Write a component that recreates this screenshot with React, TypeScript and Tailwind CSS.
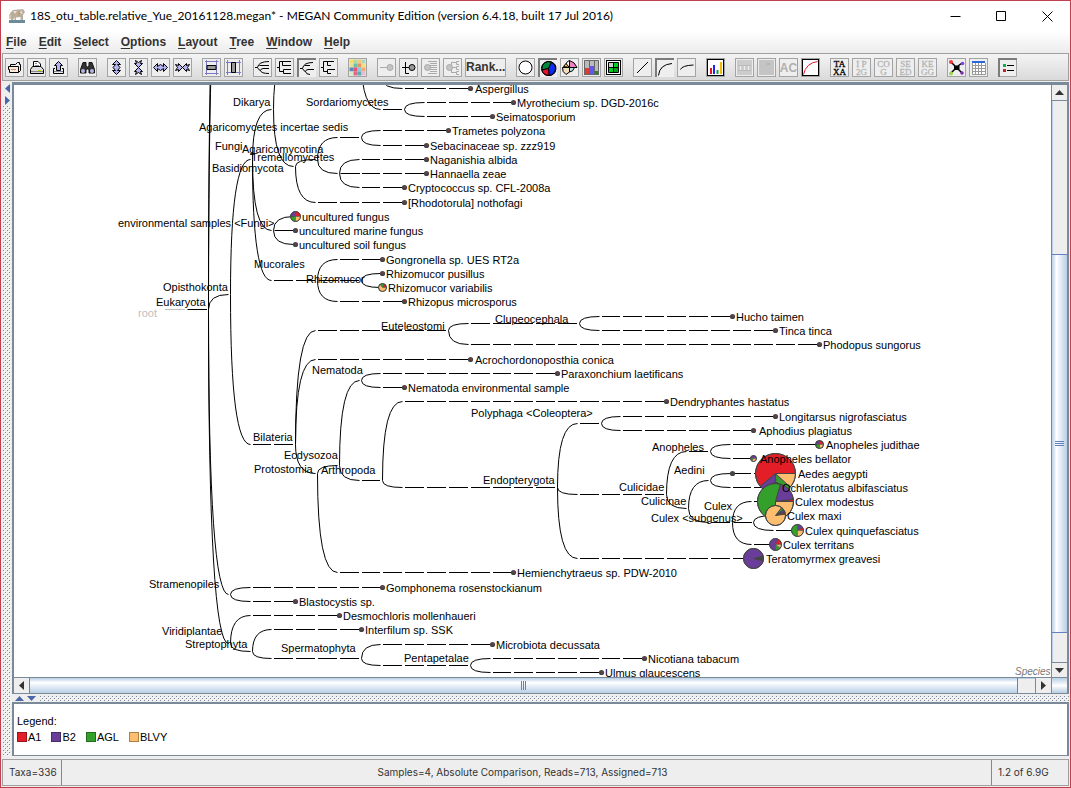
import React from "react";

/* ---------- taxonomy tree data ---------- */

const X0 = 208.5;
const STEP = 21.82;
const col = (k: number) => Math.floor(X0 + k * STEP - 0.1) + 0.5;

// [parent column, parent y, child column, child y]
const EDGES: [number, number, number, number][] = [
  [-1, 309.5, 0, 309.5],
  [0, 309.5, 1, -100],
  [0, 309.5, 1, -160],
  [0, 309.5, 1, 294.5],
  [0, 309.5, 1, 594.5],
  [0, 309.5, 1, 643.5],
  [1, 294.5, 2, 159.5],
  [1, 294.5, 4, 444.5],
  [2, 159.5, 3, 109.5],
  [2, 159.5, 3, 230.5],
  [2, 159.5, 5, 280.5],
  [3, 109.5, 4, 50.5],
  [3, 109.5, 4, 166.5],
  [3, 230.5, 4, 216.5],
  [3, 230.5, 4, 230.5],
  [3, 230.5, 4, 244.5],
  [4, 166.5, 5, 159.5],
  [4, 166.5, 9, 202.5],
  [5, 159.5, 7, 137.5],
  [5, 159.5, 6, 173.5],
  [7, 137.5, 11, 130.5],
  [7, 137.5, 10, 145.5],
  [6, 173.5, 10, 159.5],
  [6, 173.5, 10, 173.5],
  [6, 173.5, 9, 187.5],
  [5, 280.5, 8, 259.5],
  [5, 280.5, 7, 280.5],
  [5, 280.5, 9, 301.5],
  [7, 280.5, 8, 273.5],
  [7, 280.5, 8, 287.5],
  [7, 60.5, 9, 109.5],
  [8, 78.5, 12, 88.5],
  [9, 109.5, 14, 102.5],
  [9, 109.5, 13, 116.5],
  [4, 444.5, 11, 330.5],
  [4, 444.5, 12, 359.5],
  [4, 444.5, 5, 473.5],
  [11, 330.5, 17, 323.5],
  [11, 330.5, 28, 344.5],
  [17, 323.5, 24, 316.5],
  [17, 323.5, 26, 330.5],
  [5, 473.5, 6, 465.5],
  [5, 473.5, 14, 572.5],
  [6, 465.5, 7, 380.5],
  [6, 465.5, 8, 480.5],
  [7, 380.5, 16, 373.5],
  [7, 380.5, 9, 387.5],
  [8, 480.5, 21, 401.5],
  [8, 480.5, 16, 487.5],
  [16, 487.5, 18, 423.5],
  [16, 487.5, 21, 494.5],
  [16, 487.5, 25, 558.5],
  [18, 423.5, 26, 416.5],
  [18, 423.5, 25, 430.5],
  [21, 494.5, 23, 451.5],
  [21, 494.5, 22, 508.5],
  [23, 451.5, 28, 444.5],
  [23, 451.5, 25, 458.5],
  [22, 508.5, 23, 480.5],
  [22, 508.5, 24, 522.5],
  [23, 480.5, 26, 473.5],
  [23, 480.5, 26, 487.5],
  [24, 522.5, 26, 501.5],
  [24, 522.5, 25, 522.5],
  [24, 522.5, 26, 544.5],
  [25, 522.5, 26, 515.5],
  [25, 522.5, 27, 530.5],
  [1, 594.5, 8, 587.5],
  [1, 594.5, 4, 601.5],
  [1, 643.5, 6, 615.5],
  [1, 643.5, 2, 651.5],
  [2, 651.5, 7, 629.5],
  [2, 651.5, 7, 658.5],
  [7, 658.5, 13, 644.5],
  [7, 658.5, 12, 665.5],
  [12, 665.5, 20, 658.5],
  [12, 665.5, 18, 672.5],
];

// [label, x, centre y]
const INNER: [string, number, number][] = [
  ["Dikarya", 233, 102],
  ["Sordariomycetes", 306, 102],
  ["Agaricomycetes incertae sedis", 199, 127],
  ["Fungi", 215, 146],
  ["Agaricomycotina", 242, 149],
  ["Tremellomycetes", 251, 157],
  ["Basidiomycota", 212, 168],
  ["environmental samples <Fungi>", 118, 223],
  ["Mucorales", 254, 264],
  ["Rhizomucor", 306, 279],
  ["Opisthokonta", 163, 287],
  ["Eukaryota", 156, 302],
  ["Euteleostomi", 381, 326],
  ["Clupeocephala", 495, 319],
  ["Nematoda", 312, 370],
  ["Bilateria", 253, 437],
  ["Ecdysozoa", 284, 455],
  ["Protostomia", 254, 469],
  ["Arthropoda", 321, 470],
  ["Polyphaga <Coleoptera>", 471, 413],
  ["Endopterygota", 483, 480],
  ["Anopheles", 652, 447],
  ["Culicidae", 619, 487],
  ["Aedini", 674, 470],
  ["Culicinae", 641, 501],
  ["Culex", 704, 506],
  ["Culex <subgenus>", 651, 518],
  ["Stramenopiles", 149, 584],
  ["Viridiplantae", 162, 631],
  ["Streptophyta", 185, 644],
  ["Spermatophyta", 281, 648],
  ["Pentapetalae", 404, 658],
];

// [label, column of its dot, y, x of the text]
const LEAVES: [string, number, number, number][] = [
  ["Aspergillus", 12, 88.5, 475],
  ["Myrothecium sp. DGD-2016c", 14, 102.5, 517],
  ["Seimatosporium", 13, 116.5, 496],
  ["Trametes polyzona", 11, 130.5, 452],
  ["Sebacinaceae sp. zzz919", 10, 145.5, 430],
  ["Naganishia albida", 10, 159.5, 430],
  ["Hannaella zeae", 10, 173.5, 430],
  ["Cryptococcus sp. CFL-2008a", 9, 187.5, 408],
  ["[Rhodotorula] nothofagi", 9, 202.5, 408],
  ["uncultured marine fungus", 4, 230.5, 299],
  ["uncultured soil fungus", 4, 244.5, 299],
  ["Gongronella sp. UES RT2a", 8, 259.5, 386],
  ["Rhizomucor pusillus", 8, 273.5, 386],
  ["Rhizopus microsporus", 9, 301.5, 408],
  ["Hucho taimen", 24, 316.5, 736],
  ["Tinca tinca", 26, 330.5, 779],
  ["Phodopus sungorus", 28, 344.5, 823],
  ["Acrochordonoposthia conica", 12, 359.5, 475],
  ["Paraxonchium laetificans", 16, 373.5, 561],
  ["Nematoda environmental sample", 9, 387.5, 408],
  ["Dendryphantes hastatus", 21, 401.5, 670],
  ["Longitarsus nigrofasciatus", 26, 416.5, 779],
  ["Aphodius plagiatus", 25, 430.5, 759],
  ["Hemienchytraeus sp. PDW-2010", 14, 572.5, 517],
  ["Gomphonema rosenstockianum", 8, 587.5, 386],
  ["Blastocystis sp.", 4, 601.5, 299],
  ["Desmochloris mollenhaueri", 6, 615.5, 343],
  ["Interfilum sp. SSK", 7, 629.5, 365],
  ["Microbiota decussata", 13, 644.5, 496],
  ["Nicotiana tabacum", 20, 658.5, 648],
  ["Ulmus glaucescens", 18, 672.5, 605],
];

const RED = "#e31e26";
const PURPLE = "#6a3d9a";
const GREEN = "#33a02c";
const ORANGE = "#fdbf6f";
const DARK = "#454545";

type Slice = [number, number, string];
type Pie = { label: string; k: number; y: number; r: number; tx: number; slices: Slice[] };

const QUARTERS: Slice[] = [
  [0, 90, RED],
  [90, 180, PURPLE],
  [180, 270, GREEN],
  [270, 360, ORANGE],
];

const PIES: Pie[] = [
  { label: "uncultured fungus", k: 4, y: 216.5, r: 5, tx: 302, slices: QUARTERS },
  { label: "Rhizomucor variabilis", k: 8, y: 287.5, r: 4, tx: 388, slices: [[0, 60, RED], [60, 130, GREEN], [130, 360, ORANGE]] },
  { label: "Anopheles judithae", k: 28, y: 444.5, r: 4, tx: 826, slices: QUARTERS },
  { label: "Anopheles bellator", k: 25, y: 458.5, r: 3, tx: 760, slices: [[0, 170, PURPLE], [170, 240, GREEN], [240, 360, ORANGE]] },
  { label: "Aedes aegypti", k: 26, y: 473.5, r: 20, tx: 798, slices: [[0, 220, RED], [220, 272, PURPLE], [272, 317, GREEN], [317, 360, ORANGE]] },
  { label: "Ochlerotatus albifasciatus", k: 26, y: 487.5, r: 5, tx: 782, slices: QUARTERS },
  { label: "Culex modestus", k: 26, y: 501.5, r: 18, tx: 795, slices: [[0, 7, RED], [7, 74, PURPLE], [74, 270, GREEN], [270, 360, ORANGE]] },
  { label: "Culex maxi", k: 26, y: 515.5, r: 10, tx: 787, slices: [[8, 20, RED], [20, 36, PURPLE], [36, 52, GREEN], [52, 368, ORANGE]] },
  { label: "Culex quinquefasciatus", k: 27, y: 530.5, r: 6, tx: 805, slices: [[0, 32, RED], [32, 90, PURPLE], [90, 270, GREEN], [270, 360, ORANGE]] },
  { label: "Culex territans", k: 26, y: 544.5, r: 6, tx: 783, slices: [[0, 70, RED], [70, 270, PURPLE], [270, 325, GREEN], [325, 360, ORANGE]] },
  { label: "Teratomyrmex greavesi", k: 25, y: 558.5, r: 10, tx: 766, slices: [[-14, 14, DARK], [14, 346, PURPLE]] },
];

function edgePath([pk, py, ck, cy]: [number, number, number, number]) {
  const px = col(pk);
  let d = "";
  if (py === cy) d = `M${px + 1} ${cy}H${col(pk + 1) - 1.5}`;
  else d = `M${px} ${py}Q${px} ${cy} ${col(pk + 1) - 2} ${cy}`;
  for (let k = pk + 1; k < ck; k++) d += `M${col(k) + 0.5} ${cy}H${col(k + 1) - 2.5}`;
  return d;
}

function slicePath(cx: number, cy: number, r: number, a: number, b: number) {
  const p = (t: number) => {
    const rad = (t * Math.PI) / 180;
    return `${(cx + r * Math.cos(rad)).toFixed(2)} ${(cy - r * Math.sin(rad)).toFixed(2)}`;
  };
  return `M${cx} ${cy}L${p(a)}A${r} ${r} 0 ${b - a > 180 ? 1 : 0} 0 ${p(b)}Z`;
}

function Tree() {
  return (
    <svg width="1037" height="592" viewBox="14 85 1037 592" className="block shrink-0 text-[11px]" role="img" aria-label="Taxonomy tree">
      <g fill="none" strokeWidth="1">
        <path d="M165 309.5H185" stroke="#c0c0c0" />
        <g stroke="#000">
          {EDGES.map((e, i) => (
            <path key={i} d={edgePath(e)} />
          ))}
          <path d="M250 154H255" />
        </g>
      </g>
      <text x="138" y="317" fill="#c0c0c0">root</text>
      {LEAVES.map(([name, k, y]) => (
        <g key={name}>
          <circle cx={col(k)} cy={y} r="2.6" fill={DARK} />
          <circle cx={col(k) + 0.5} cy={y - 0.5} r="0.9" fill="#8a3a4a" />
        </g>
      ))}
      <circle cx={col(24)} cy={473.5} r="2.6" fill={DARK} />
      {PIES.map((p) => (
        <g key={p.label} stroke={DARK}>
          {p.slices.map(([a, b, c]) => (
            <path key={c} d={slicePath(col(p.k), p.y, p.r, a, b)} fill={c} strokeWidth={p.r < 8 ? 0.5 : 1} />
          ))}
          <circle cx={col(p.k)} cy={p.y} r={p.r} fill="none" strokeWidth="1" />
        </g>
      ))}
      <g fill="#000">
        {LEAVES.map(([name, , y, x]) => (
          <text key={name} x={x} y={Math.round(y + 4.5)}>{name}</text>
        ))}
        {PIES.map((p) => (
          <text key={p.label} x={p.tx} y={p.y + 4.5}>{p.label}</text>
        ))}
        {INNER.map(([name, x, y]) => (
          <text key={name} x={x} y={y + 4}>{name}</text>
        ))}
      </g>
      <text x="1015" y="675" className="text-[10px] italic" fill="#777">Species</text>
    </svg>
  );
}

/* ---------- toolbar ---------- */

type Tool = { name: string; icon: React.ReactNode; pressed?: boolean; off?: boolean };

const L = (d: string, stroke = "#000", fill = "none") => <path d={d} stroke={stroke} fill={fill} />;

function letters(a: string, b: string, color: string) {
  return (
    <g fill={color} stroke={color} strokeWidth="0.3" className="text-[9px]" fontFamily="Liberation Serif, serif" textAnchor="middle">
      <text x="8.5" y="8">{a}</text>
      <text x="8.5" y="16">{b}</text>
    </g>
  );
}

const arrow = "#b4b4f0";
const GROUPS: Tool[][] = [
  [
    { name: "Open", icon: <>{L("M4.5 7V5.5H9.5L11.5 3.5H13.5V5.5H14.5V11.5L12.5 13.5")}{L("M2.5 7.5H12.5V13.5H3.5V10.5H2.5Z", "#000", "#fbe9dd")}{L("M5 10.5H10", "#c08868")}</> },
    { name: "Print", icon: <>{L("M5.5 8V2.5H10L12.5 5V8", "#000", "#fff")}{L("M4.5 7.5H13L15.5 10.5V14.5H2.5V10.5Z", "#000", "#ddd")}{L("M3 12.5H15", "#888")}{L("M10 11.5H13", "#c0d000")}{L("M7 4.5H9M7 6.5H11", "#88a")}</> },
    { name: "Export", icon: <>{L("M8.5 2.5L12.5 6.5H10.5V11.5H6.5V6.5H4.5Z", "#000", arrow)}{L("M5 9.5H3.5V14.5H13.5V9.5H12", "#000")}{L("M4 12.5H13", "#889")}</> },
  ],
  [{ name: "Find", icon: <>{L("M4 3.5H7V7L8.5 8L10 7V3.5H13L15.5 10.5V14H10V10H7V14H1.5V10.5Z", "#111", "#333")}<circle cx="4" cy="12" r="2" fill="#b4b4e8" /><circle cx="13" cy="12" r="2" fill="#b4b4e8" /></> }],
  [
    { name: "Expand vertical", icon: L("M8.5 1.5L12.5 5.5H9.5L12 8.500L9.500 11.500H12.5L8.5 15.5L4.5 11.500H7.500L5 8.500L7.500 5.500H4.5Z", "#000", arrow) },
    { name: "Contract vertical", icon: <>{L("M5.5 1.500L8.5 3.500L11.5 1.500L10.500 4.500H12.500L8.5 8.500L4.500 4.500H6.500Z", "#000", arrow)}{L("M5.5 15.500L8.5 13.500L11.5 15.500L10.500 12.500H12.500L8.5 8.500L4.500 12.500H6.500Z", "#000", arrow)}</> },
    { name: "Expand horizontal", icon: L("M1.5 8.5L5.5 4.500V7.500L8.500 5.500L11.500 7.500V4.500L15.500 8.5L11.500 12.500V9.500L8.500 11.500L5.500 9.500V12.500Z", "#000", arrow) },
    { name: "Contract horizontal", icon: <>{L("M1.500 5.500L4.500 6.500V4.500L8.500 8.5L4.500 12.500V10.500L1.500 11.500L3.500 8.5Z", "#000", arrow)}{L("M15.500 5.500L12.500 6.500V4.500L8.500 8.5L12.500 12.500V10.500L15.500 11.500L13.500 8.5Z", "#000", arrow)}</> },
  ],
  [
    { name: "Fit vertical", icon: <>{L("M3.5 1V16M13.5 1V16", "#7a7ac0")}{L("M2 2.5H15.5M2 14.5H15.5", "#7a7ac0")}{L("M4 6.5H13V10.5H4Z", "#000", "#999")}</> },
    { name: "Fit horizontal", icon: <>{L("M1 3.5H16M1 13.5H16", "#7a7ac0")}{L("M2.5 1V16M14.5 1V16", "#7a7ac0")}{L("M6.5 3.5H10.5V13.5H6.5Z", "#000", "#999")}</> },
  ],
  [
    { name: "Rounded cladogram", icon: L("M1 8.5H3.5Q4.5 2.5 15 2.5M5.500 6.500H15M3.500 8.500Q5 11.500 6.500 11.500M15 9.500H9Q6.500 10 6.500 11.500Q7 14.500 15 14.500") },
    { name: "Rectangular cladogram", icon: L("M1 8.500H3.500V2.500H15M6.500 2.500V6.500H15M3.500 8.500V12.500H7.500M7.500 10.500V14.500H15M7.500 10.500H15") },
    { name: "Rounded phylogram", pressed: true, icon: L("M1 8.500H3.500Q4.500 2.500 14 2.500M5.500 5.500H11M3.500 8.500Q5 11.500 6.500 11.500M15 9.500H9Q6.500 10 6.500 11.500Q7 14.500 11 14.500") },
    { name: "Rectangular phylogram", icon: L("M1 8.500H3.500V2.500H14M7.500 2.500V6.500H11M3.500 8.500V12.500H7.500M7.500 10.500V14.500H11M7.500 10.500H15") },
  ],
  [{
    name: "Colors",
    icon: <g>{["#f5dc64", "#b4d6a0", "#f2c878", "#a8d8c8", "#e8e09a", "#62c4a8", "#e8906c", "#f4e078", "#5b86c0", "#e8506c", "#8fc4e0", "#f3a878", "#d8e8d0", "#d86c80", "#5ca8b8", "#e0c0d0"].map((c, i) => (
      <rect key={i} x={(i % 4) * 4 + 0.5} y={Math.floor(i / 4) * 4 + 0.5} width="4" height="4" fill={c} />
    ))}</g>,
  }],
  [
    { name: "Collapse", off: true, icon: <>{L("M2 8.500H9", "#aaa")}<circle cx="12" cy="8.500" r="3" fill="#c4c4c4" stroke="#aaa" /></> },
    { name: "Uncollapse", icon: <>{L("M2 8.500H9M5.500 3V14.500H9")}<circle cx="12" cy="8.500" r="3" fill="#999" stroke="#000" /></> },
    { name: "Uncollapse subtree", off: true, icon: <>{L("M6 2.500H15M8 4.500H15M8 6.500H15M8 8.500H15M8 10.500H15M8 12.500H15M6 14.500H15", "#aaa")}<circle cx="5.500" cy="8.500" r="3" fill="#c4c4c4" stroke="#aaa" /></> },
    { name: "Collapse subtree", off: true, icon: <>{L("M7.500 3V14M8 3.500H12M8 8.500H12M8 13.500H12M15 2.500H12.500V5.500H15M15 7.500H12.500V10.500H15M15 12.500H12.500V15.500H15", "#aaa")}<circle cx="5.500" cy="8.500" r="3" fill="#c4c4c4" stroke="#aaa" /></> },
  ],
  [
    { name: "Draw circles", icon: <circle cx="8.500" cy="8.500" r="6.500" fill="#fff" stroke="#000" /> },
    { name: "Draw pies", pressed: true, icon: <>{L("M8.500 8.500L2 10A7 7 0 0 1 11.500 2Z", "#000", "#008a3c")}{L("M8.500 8.500L11.500 2A7 7 0 0 1 9 15.500Z", "#000", "#0a2cf0")}{L("M8.500 8.500L9 15.500A7 7 0 0 1 2 10Z", "#000", "#e8102a")}<circle cx="8.500" cy="8.500" r="7" fill="none" stroke="#000" /></> },
    { name: "Draw coxcombs", icon: <>{L("M8.500 8.500L5 5Q6 2 8.500 1.500Z", "#000", "#fff")}{L("M8.500 8.500L2.500 7.500L5 4.500Z", "#000", "#f0c840")}{L("M8.500 8.500V1.500Q14 3 16 8.500Z", "#000", "#f080c0")}{L("M8.500 8.500H13.500Q12 13 8.500 13Z", "#000", "#b0e8e0")}{L("M8.500 8.500V13L5 15.500Q1 13 1.500 8.500Z", "#000", "#f4dcb8")}</> },
    { name: "Draw bars", icon: <><rect x="1" y="1" width="15" height="15" fill="#bbb" /><rect x="1" y="9" width="5" height="7" fill="#e03c2c" /><rect x="6" y="7" width="5" height="9" fill="#5a5af0" /><rect x="11" y="12" width="5" height="4" fill="#208c20" />{L("M1.500 1.500H15.500V15.500H1.500ZM6.500 1V16M11.500 1V16", "#666")}</> },
    { name: "Draw heatmaps", icon: <><rect x="1.500" y="1.500" width="14" height="14" fill="#fff" stroke="#000" /><rect x="4" y="4" width="9" height="9" fill="#ccc" /><rect x="9" y="4" width="4" height="4" fill="#00d020" /><rect x="4" y="9" width="4" height="4" fill="#00d020" /><rect x="9" y="9" width="4" height="4" fill="#00a020" />{L("M3.500 3.500H13.500V13.500H3.500ZM8.500 3V14M3 8.500H14")}</> },
  ],
  [
    { name: "Linear scale", icon: L("M3 14L14 3") },
    { name: "Square-root scale", pressed: true, icon: L("M1.500 15.500Q2.500 4.500 15 3.500") },
    { name: "Log scale", icon: L("M2.500 10.500Q4 6.500 15.500 6") },
  ],
  [{ name: "Chart", icon: <><rect x="0.500" y="0.500" width="16" height="16" fill="#fff" stroke="#000" /><rect x="3" y="9" width="2" height="6" fill="#e8102a" /><rect x="6" y="6" width="2" height="9" fill="#2020f0" /><rect x="9.500" y="11" width="2" height="4" fill="#10a040" /><rect x="13" y="3" width="2" height="12" fill="#f8b800" /></> }],
  [
    { name: "Alignment", off: true, icon: <><rect x="1" y="1" width="15" height="15" fill="#ccc" />{L("M2 6.500H15M2 11.500H15", "#bbb")}{L("M4.500 7V11M8.500 7V11M12.500 7V11", "#eee")}</> },
    { name: "Inspector", off: true, icon: <><rect x="1" y="1" width="15" height="15" fill="#c4c4c4" /><rect x="9" y="4" width="3" height="2" fill="#b4b4b4" /></> },
    { name: "Attributes", off: true, icon: <text x="8.500" y="13" textAnchor="middle" className="text-[12px] font-bold" fill="#b0b0b0">AC</text> },
    { name: "Rarefaction", icon: <><rect x="0.500" y="0.500" width="16" height="16" fill="#fff" stroke="#000" />{L("M1.500 15.500Q4 4 15.500 2.500", "#e8102a")}</> },
  ],
  [
    { name: "Taxonomy", icon: letters("TA", "XA", "#000") },
    { name: "InterPro", off: true, icon: letters("I P", "2G", "#b4b4b4") },
    { name: "COG", off: true, icon: letters("CO", "G", "#b4b4b4") },
    { name: "SEED", off: true, icon: letters("SE", "ED", "#b4b4b4") },
    { name: "KEGG", off: true, icon: letters("KE", "GG", "#b4b4b4") },
  ],
  [
    { name: "Cluster", icon: <><path d="M3 3L7 7M14 4L10 7M3 14L7 10M14 14L10 10" stroke="#000" strokeWidth="1.500" />{L("M6.500 7H11V10.500H6.500Z", "#000", "#000")}<circle cx="3" cy="3" r="2" fill="#f03838" /><circle cx="14.500" cy="4.500" r="1.800" fill="#8040f0" /><circle cx="3" cy="14.500" r="2" fill="#9cd850" /><circle cx="14" cy="14" r="1.800" fill="#8030b0" /></> },
    { name: "Table", icon: <><rect x="2" y="3" width="13" height="12" fill="#fff" /><rect x="2" y="2" width="13" height="2" fill="#2868d8" />{L("M2.500 4V15.500H15.500V4M2 6.500H15M2 9.500H15M2 12.500H15M5.500 4V15M8.500 4V15M11.500 4V15", "#999")}</> },
  ],
  [{ name: "Show legend", pressed: true, icon: <><rect x="3" y="4" width="3" height="3" fill="#10b050" /><rect x="3" y="9" width="3" height="3" fill="#c02030" />{L("M7 5.500H14M7 10.500H14")}<path d="M16.500 0V16.500H0" stroke="#a3a3a3" /></> }],
];

function ToolButton({ tool }: { tool: Tool }) {
  return (
    <button
      type="button"
      aria-label={tool.name}
      disabled={tool.off}
      aria-pressed={tool.pressed}
      className={
        tool.pressed
          ? "flex size-[19px] items-center justify-center border-t-2 border-l-2 border-[#7c7c7c] bg-[#efefef]"
          : "flex size-[19px] items-center justify-center border border-[#a3a3a3] bg-[#eeeeee]"
      }
    >
      <svg width="17" height="17" viewBox="0 0 17 17" fill="none" aria-hidden="true">{tool.icon}</svg>
    </button>
  );
}

/* ---------- small parts ---------- */

function Dots({ id }: { id: string }) {
  return (
    <svg className="block h-full w-full" aria-hidden="true">
      <defs>
        <pattern id={id} width="4" height="4" patternUnits="userSpaceOnUse">
          <rect width="1" height="1" fill="#7a8a99" />
          <rect x="2" y="2" width="1" height="1" fill="#7a8a99" />
          <rect x="1" y="1" width="1" height="1" fill="#fff" />
          <rect x="3" y="3" width="1" height="1" fill="#fff" />
        </pattern>
      </defs>
      <rect width="100%" height="100%" fill={`url(#${id})`} />
    </svg>
  );
}

function Arrow({ d, color = "#333" }: { d: string; color?: string }) {
  return (
    <svg width="9" height="9" viewBox="0 0 9 9" aria-hidden="true">
      <path d={d} fill={color} />
    </svg>
  );
}

const UP = "M4.500 2L9 7H0Z";
const DOWN = "M4.500 7L9 2H0Z";
const LEFT = "M2 4.500L7 0V9Z";
const RIGHT = "M7 4.500L2 0V9Z";

const MENUS = ["File", "Edit", "Select", "Options", "Layout", "Tree", "Window", "Help"];

export default function App() {
  return (
    <div className="flex min-h-screen flex-col border border-[#c0404f] bg-[#eeeeee] font-['Liberation_Sans',Arial,sans-serif] text-black">
      <header className="flex h-[30px] items-center bg-white pl-2">
        <svg width="17" height="17" viewBox="0 0 17 17" aria-hidden="true">
          <rect y="12" width="16" height="3" fill="#6c8a98" />
          <path d="M2 12V8L1 5L4 2L9 1.500L14 1L16 4L14 7V12H11.500V9L7 9.500V12H5.500V9L4 12Z" fill="#b8ae9e" />
          <path d="M4 3L8 3L6 6ZM12 2L14 6L11 5Z" fill="#e4e0d8" />
          <path d="M1 6V11M10 3V8" stroke="#c88a50" />
        </svg>
        <h1 className="ml-1 flex-1 font-[Lato,'Noto_Sans',sans-serif] text-[12px] leading-4">
          18S_otu_table.relative_Yue_20161128.megan* - MEGAN Community Edition (version 6.4.18, built 17 Jul 2016)
        </h1>
        <div className="flex">
          {[
            ["Minimize", "M0.500 5.500H10.500"],
            ["Maximize", "M0.500 0.500H9.500V9.500H0.500Z"],
            ["Close", "M0.500 0.500L10.500 10.500M10.500 0.500L0.500 10.500"],
          ].map(([name, d]) => (
            <button key={name} type="button" aria-label={name} className="flex h-[28px] w-[46px] items-center justify-center">
              <svg width="11" height="11" viewBox="0 0 11 11" fill="none" stroke="#000" aria-hidden="true"><path d={d} /></svg>
            </button>
          ))}
        </div>
      </header>

      <nav className="flex h-[22px] items-center gap-3 bg-linear-to-b from-white to-[#ececec] pl-[5px] text-[12px] leading-4 font-bold text-[#333]">
        {MENUS.map((m) => (
          <button key={m} type="button"><span className="underline underline-offset-2">{m[0]}</span>{m.slice(1)}</button>
        ))}
      </nav>

      <div role="toolbar" aria-label="Main toolbar" className="mx-px flex h-[28px] items-center gap-2.5 border border-[#a0a0a0] bg-linear-to-b from-[#f4f4f4] to-[#dadada] pl-0.5">
        {GROUPS.map((g, i) => (
          <div key={i} className="flex gap-[3px]">
            {g.map((t) => <ToolButton key={t.name} tool={t} />)}
            {i === 6 && (
              <button type="button" className="h-[19px] w-[41px] border border-[#a3a3a3] bg-[#eeeeee] text-[12px] leading-4 font-bold text-[#333]">Rank...</button>
            )}
          </div>
        ))}
      </div>

      <div className="mt-px flex flex-1 pr-px">
        <div className="flex w-[11px] shrink-0 flex-col bg-[#eeeeee] pl-0.5">
          <button type="button" aria-label="Collapse left" className="flex h-3 items-center"><Arrow d={LEFT} color="#4a66a8" /></button>
          <button type="button" aria-label="Expand left" className="flex h-3 items-center"><Arrow d={RIGHT} color="#4a66a8" /></button>
          <div className="w-2 flex-1"><Dots id="dots-left" /></div>
        </div>

        <div className="flex min-w-0 flex-1 flex-col">
          <div className="flex flex-1 flex-col border-2 border-t-[3px] border-b border-[#7a8a99] bg-white">
            <div className="flex flex-1">
              <main className="min-w-0 flex-1 overflow-hidden bg-white"><Tree /></main>
              <div className="flex w-4 shrink-0 flex-col border-l border-[#7a8a99] bg-[#eeeeee]">
                <button type="button" aria-label="Scroll up" className="flex h-4 items-center justify-center border-b border-[#7a8a99]"><Arrow d={UP} /></button>
                <div className="h-[153px] border-l border-[#b8cfe5]" />
                <div className="flex flex-1 flex-col items-center justify-center gap-px border-y border-[#6382bf] bg-linear-to-r from-[#b8cfe5] via-white via-30% to-[#b8cfe5]">
                  <span className="h-px w-[9px] bg-[#6382bf]" />
                  <span className="h-px w-[9px] bg-[#6382bf]" />
                  <span className="h-px w-[9px] bg-[#6382bf]" />
                </div>
                <div className="h-[29px] border-l border-[#b8cfe5]" />
                <button type="button" aria-label="Scroll down" className="flex h-[15px] items-center justify-center border-t border-[#7a8a99]"><Arrow d={DOWN} /></button>
              </div>
            </div>
            <div className="flex h-4 border-t border-[#7a8a99] bg-[#eeeeee]">
              <button type="button" aria-label="Scroll left" className="flex w-[15px] items-center justify-center"><Arrow d={LEFT} /></button>
              <div className="flex flex-1 items-center justify-center gap-px border-x border-[#6382bf] bg-linear-to-b from-[#b8cfe5] via-white via-30% to-[#b8cfe5]">
                <span className="h-[9px] w-px bg-[#6382bf]" />
                <span className="h-[9px] w-px bg-[#6382bf]" />
                <span className="h-[9px] w-px bg-[#6382bf]" />
              </div>
              <div className="w-[17px] border-t border-[#b8cfe5]" />
              <button type="button" aria-label="Scroll right" className="flex w-4 items-center justify-center border-l border-[#7a8a99]"><Arrow d={RIGHT} /></button>
              <div className="w-4 border-l border-[#7a8a99] bg-linear-to-b from-[#b8cfe5] via-white to-[#b8cfe5]" />
            </div>
          </div>

          <div className="flex h-2 items-center">
            <button type="button" aria-label="Collapse down" className="flex w-3 justify-end"><Arrow d={UP} color="#4a66a8" /></button>
            <button type="button" aria-label="Expand down" className="mr-1 flex w-3 justify-end"><Arrow d={DOWN} color="#4a66a8" /></button>
            <div className="h-[5px] flex-1"><Dots id="dots-bottom" /></div>
          </div>

          <section className="h-[54px] border-2 border-b border-[#7a8a99] bg-white pt-2.5 pl-[3px] text-[11px] leading-[14px]">
            <h2>Legend:</h2>
            <ul className="mt-0.5 flex gap-2.5">
              <li className="flex items-center"><span className="mr-px size-2.5 border border-[#991420] bg-[#e31e26]" />A1</li>
              <li className="flex items-center"><span className="mr-px size-2.5 border border-[#472a68] bg-[#6a3d9a]" />B2</li>
              <li className="flex items-center"><span className="mr-px size-2.5 border border-[#226c1e] bg-[#33a02c]" />AGL</li>
              <li className="flex items-center"><span className="mr-px size-2.5 border border-[#aa804a] bg-[#fdbf6f]" />BLVY</li>
            </ul>
          </section>
        </div>
      </div>

      <footer className="mx-px mt-[3px] mb-px flex h-[27px] items-stretch border border-[#a0a0a0] font-[Inter,'Liberation_Sans',sans-serif] text-[10px] text-[#333]">
        <div className="flex w-[59px] items-center border-r border-[#7a8a99] pl-1.5">Taxa=336</div>
        <div className="flex flex-1 items-center justify-center pr-2">Samples=4, Absolute Comparison, Reads=713, Assigned=713</div>
        <div className="flex w-[77px] items-center border-l border-[#7a8a99] pl-1.5">1.2 of 6.9G</div>
      </footer>
    </div>
  );
}
